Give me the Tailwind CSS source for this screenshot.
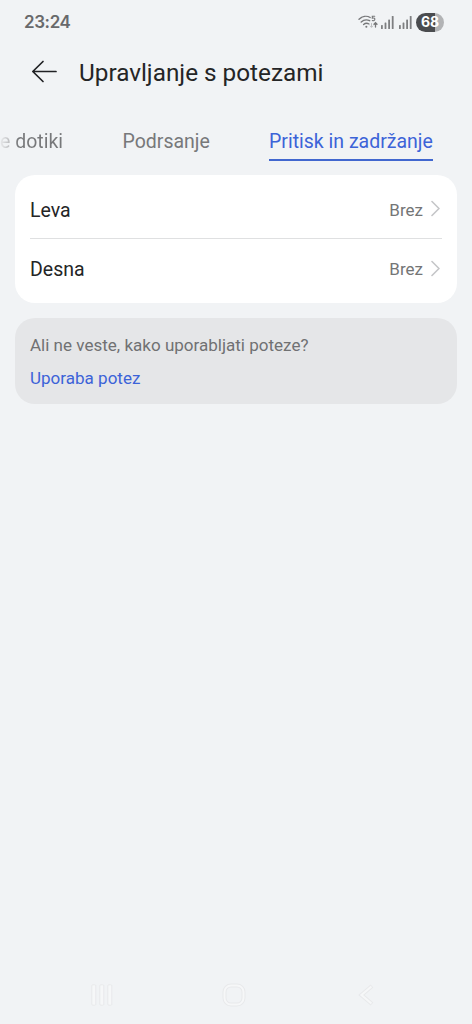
<!DOCTYPE html>
<html lang="sl">
<head>
<meta charset="utf-8">
<title>Upravljanje s potezami</title>
<script src="https://cdn.jsdelivr.net/npm/@tailwindcss/browser@4"></script>
</head>
<body class="h-screen overflow-hidden bg-[#f1f3f5] font-['Roboto',sans-serif] text-[#242526]">
<div class="flex h-[1024px] w-[472px] flex-col overflow-hidden">
  <header class="flex h-11 shrink-0 items-center justify-between pr-[28px] pl-[24px] font-['Inter',sans-serif]">
    <span class="text-[17px] leading-none font-semibold tracking-[-0.400px] text-[#68696b]">23:24</span>
    <div class="flex items-center">
      <svg class="mr-[3px] h-[16px] w-[20px]" viewBox="0 0 20 16" fill="none" stroke="#77787a" stroke-width="1.400" stroke-linecap="round">
        <path d="M1 5.300C4.200 2.200 8.800 1.500 12.200 3.500M3.200 8C5.600 5.800 8.700 5.300 11.700 6.700M5.600 10.500C7.200 9.200 9.200 9 11 10"/>
        <path d="M8.300 12.700h.1" stroke-width="2"/>
        <path d="M16.700 2.200h-2.400v2c2-.5 2.800.3 2.500 1.500-.2 1-1.500 1.200-2.500.8" stroke-width="1.100"/>
        <path d="M17.500 13V9M16 10.300l1.500-1.600 1.500 1.600" stroke-width="1.300"/>
        <path d="M13.500 9.500V13M12.200 12l1.300 1.300 1.300-1.300" stroke="#bdbec0" stroke-width="1"/>
      </svg>
      <svg class="mr-[5px] h-[13px] w-[13px]" viewBox="0 0 13 13" fill="#7e7f81"><rect y="9" width="1.800" height="4" rx=".6"/><rect x="3.600" y="6.500" width="1.800" height="6.500" rx=".6"/><rect x="7.200" y="3.500" width="1.800" height="9.500" rx=".6"/><rect x="10.800" y="0" width="1.800" height="13" rx=".6"/></svg>
      <svg class="mr-[4px] h-[13px] w-[13px]" viewBox="0 0 13 13" fill="#7e7f81"><rect y="9" width="1.800" height="4" rx=".6"/><rect x="3.600" y="6.500" width="1.800" height="6.500" rx=".6"/><rect x="7.200" y="3.500" width="1.800" height="9.500" rx=".6"/><rect x="10.800" y="0" width="1.800" height="13" rx=".6"/></svg>
      <div class="flex h-[19px] w-[28px] items-center justify-center rounded-full bg-linear-to-r from-[#4b4c4f] from-68% to-[#b2b3b5] to-68% text-[14px] leading-none font-bold text-white">68</div>
    </div>
  </header>

  <div class="flex h-[56px] shrink-0 items-center pl-[31px]">
    <svg class="h-6 w-[26px]" viewBox="0 0 26 24" fill="none" stroke="#202124" stroke-width="1.700" stroke-linecap="round" stroke-linejoin="round"><path d="M25 11.500H2M12 1.500L1.800 11.500L12 21.500"/></svg>
    <h1 class="ml-[22px] pt-[2px] text-[24.300px] leading-7 whitespace-nowrap">Upravljanje s potezami</h1>
  </div>

  <nav class="flex h-[75px] shrink-0 pt-[28px] text-[19.500px] leading-7 whitespace-nowrap text-[#77787a]">
    <span class="w-[122.500px] bg-linear-to-r from-[#e2e3e5] from-[2px] via-[#bfc0c2] via-[9px] to-[#77787a] to-[18px] bg-clip-text text-transparent">e dotiki</span>
    <span class="w-[146.500px]">Podrsanje</span>
    <span class="h-[33px] w-[164px] border-b-2 border-[#4167cf] text-[#3c63d8]">Pritisk in zadržanje</span>
  </nav>

  <main class="flex flex-col gap-[15px] px-[15px]">
    <section class="h-[128px] rounded-[20px] bg-white px-[15px] pt-1">
      <div class="flex h-[60px] items-center border-b border-[#dfe0e1]">
        <span class="grow pt-[4px] text-[19.500px]">Leva</span>
        <span class="pt-[4px] text-[17px] text-[#747576]">Brez</span>
        <svg class="mt-px mr-[2px] ml-[8px] h-[18px] w-[9px]" viewBox="0 0 9 18" fill="none" stroke="#c5c6c8" stroke-width="1.600" stroke-linecap="round" stroke-linejoin="round"><path d="M1 1.500L8 8.500L1 15.500"/></svg>
      </div>
      <div class="flex h-[60px] items-center">
        <span class="grow pt-px text-[19.500px]">Desna</span>
        <span class="pt-[2px] text-[17px] text-[#747576]">Brez</span>
        <svg class="mr-[2px] ml-[8px] h-[18px] w-[9px]" viewBox="0 0 9 18" fill="none" stroke="#c5c6c8" stroke-width="1.600" stroke-linecap="round" stroke-linejoin="round"><path d="M1 1.500L8 8.500L1 15.500"/></svg>
      </div>
    </section>
    <section class="h-[86px] rounded-[20px] bg-[#e5e6e8] px-[15px] pt-[15px] text-[17.050px] leading-6">
      <p class="whitespace-nowrap text-[#707173]">Ali ne veste, kako uporabljati poteze?</p>
      <a class="mt-[9px] block w-fit text-[#3c63d8]">Uporaba potez</a>
    </section>
  </main>

  <footer class="mt-auto flex h-[58px] shrink-0 items-center justify-between pr-[97px] pl-[91px]">
    <svg class="h-[22px] w-[22px]" viewBox="0 0 22 22" fill="#f6f7f8" stroke="#e8e9eb" stroke-width="1"><rect x=".8" y=".8" width="4" height="20.400" rx="1"/><rect x="8.800" y=".8" width="4" height="20.400" rx="1"/><rect x="16.800" y=".8" width="4" height="20.400" rx="1"/></svg>
    <svg class="-ml-[4px] h-[24px] w-[24px]" viewBox="0 0 24 24" fill="none"><rect x="2.500" y="2.500" width="19" height="19" rx="6.500" stroke="#e8e9eb" stroke-width="4"/><rect x="2.500" y="2.500" width="19" height="19" rx="6.500" stroke="#f6f7f8" stroke-width="2"/></svg>
    <svg class="h-[24px] w-[17px]" viewBox="0 0 17 24" fill="none"><path d="M14 3L3.500 12L14 21" stroke="#e8e9eb" stroke-width="4.200"/><path d="M13.400 3.500L3.500 12L13.400 20.500" stroke="#f6f7f8" stroke-width="2.200"/></svg>
  </footer>
</div>
</body>
</html>
